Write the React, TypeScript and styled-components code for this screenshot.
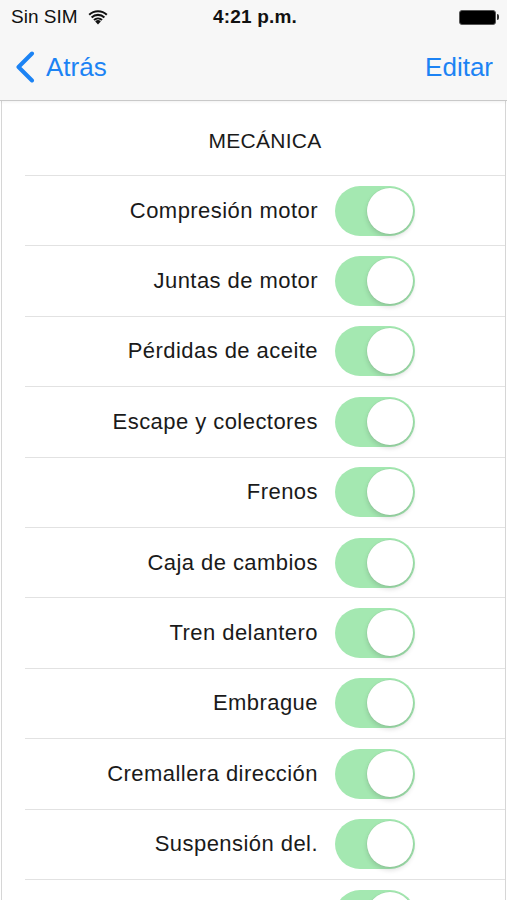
import React from "react";
import styled, { createGlobalStyle } from "styled-components";

const GlobalStyle = createGlobalStyle`
  html, body { margin: 0; padding: 0; background: #ffffff; }
  body { font-family: "Liberation Sans", Arial, sans-serif; overflow: hidden; }
`;

const Screen = styled.div`
  width: 507px;
  height: 900px;
  overflow: hidden;
  background: #ffffff;
`;

const TopBar = styled.header`
  background: #f7f7f7;
  border-bottom: 1px solid #c9c9c9;
  box-shadow: 0 1px 3px rgba(0, 0, 0, 0.06);
  position: relative;
  z-index: 1;
`;

const StatusBar = styled.div`
  height: 34px;
  display: grid;
  grid-template-columns: 1fr auto 1fr;
  align-items: center;
  padding: 0 8px 0 11px;
  color: #111;
  font-size: 19px;
`;

const Carrier = styled.div`
  display: flex;
  align-items: center;
  gap: 10px;
`;

const Time = styled.div`
  font-weight: 700;
  font-size: 19px;
  letter-spacing: 0.2px;
`;

const BatteryWrap = styled.div`
  justify-self: end;
  display: flex;
  align-items: center;
  gap: 1px;
`;

const BatteryBody = styled.div`
  width: 35px;
  height: 13px;
  border-radius: 3px;
  background: #000;
  border: 1px solid #555;
`;

const BatteryNub = styled.div`
  width: 2px;
  height: 6px;
  border-radius: 0 2px 2px 0;
  background: #333;
`;

const NavBar = styled.nav`
  height: 66px;
  display: flex;
  align-items: center;
  justify-content: space-between;
  padding: 0 14px 0 14px;
`;

const NavButton = styled.button`
  display: flex;
  align-items: center;
  gap: 10px;
  border: none;
  background: none;
  padding: 0;
  color: #1c83f4;
  font-family: "Liberation Sans", Arial, sans-serif;
  font-size: 26px;
  cursor: pointer;
`;

const Table = styled.main`
  margin: 0 1px;
  border-left: 1px solid #d6d6d6;
  border-right: 1px solid #d6d6d6;
  min-height: 900px;
`;

const SectionHeader = styled.div`
  margin-left: 23px;
  height: 75px;
  box-sizing: border-box;
  padding-top: 6px;
  border-bottom: 1px solid #e2e2e2;
  display: flex;
  align-items: center;
  justify-content: center;
  font-size: 21px;
  letter-spacing: 0.3px;
  color: #1a1a1a;
`;

const Row = styled.div`
  margin-left: 23px;
  height: 70.4px;
  box-sizing: border-box;
  border-bottom: 1px solid #e2e2e2;
  display: flex;
  align-items: center;
`;

const Label = styled.span`
  flex: 0 0 293px;
  text-align: right;
  font-size: 22px;
  letter-spacing: 0.45px;
  color: #1a1a1a;
  white-space: nowrap;
`;

const Switch = styled.div<{ $on: boolean }>`
  margin-left: 17px;
  width: 80px;
  height: 50px;
  border-radius: 25px;
  box-sizing: border-box;
  background: ${(p) => (p.$on ? "#a4e8b1" : "#ececec")};
  display: flex;
  align-items: center;
  justify-content: ${(p) => (p.$on ? "flex-end" : "flex-start")};
  padding: 2px;
`;

const Knob = styled.div`
  width: 46px;
  height: 46px;
  border-radius: 50%;
  background: #ffffff;
  box-shadow: 0 3px 5px rgba(0, 0, 0, 0.14), 0 0 0 0.5px rgba(0, 0, 0, 0.06);
`;

const WifiIcon = () => (
  <svg width="20" height="15" viewBox="0 0 20 15">
    <path d="M10 14.5 L7.2 11.4 A4 4 0 0 1 12.8 11.4 Z" fill="#111" />
    <path d="M5.3 9.3 A6.8 6.8 0 0 1 14.7 9.3 L13.3 10.8 A4.8 4.8 0 0 0 6.7 10.8 Z" fill="#111" />
    <path d="M2.9 6.7 A10.2 10.2 0 0 1 17.1 6.7 L15.7 8.2 A8.2 8.2 0 0 0 4.3 8.2 Z" fill="#111" />
    <path d="M0.5 4.1 A13.6 13.6 0 0 1 19.5 4.1 L18.1 5.6 A11.6 11.6 0 0 0 1.9 5.6 Z" fill="#111" />
  </svg>
);

const Chevron = () => (
  <svg width="22" height="32" viewBox="0 0 22 32">
    <path d="M18 2.5 L4.5 16 L18 29.5" fill="none" stroke="#1c83f4" strokeWidth="4" strokeLinecap="round" strokeLinejoin="round" />
  </svg>
);

const items = [
  "Compresión motor",
  "Juntas de motor",
  "Pérdidas de aceite",
  "Escape y colectores",
  "Frenos",
  "Caja de cambios",
  "Tren delantero",
  "Embrague",
  "Cremallera dirección",
  "Suspensión del.",
  "",
];

export default function App() {
  return (
    <Screen>
      <GlobalStyle />
      <TopBar>
        <StatusBar>
          <Carrier>
            <span>Sin SIM</span>
            <WifiIcon />
          </Carrier>
          <Time>4:21 p.m.</Time>
          <BatteryWrap>
            <BatteryBody />
            <BatteryNub />
          </BatteryWrap>
        </StatusBar>
        <NavBar>
          <NavButton>
            <Chevron />
            <span>Atrás</span>
          </NavButton>
          <NavButton>Editar</NavButton>
        </NavBar>
      </TopBar>
      <Table>
        <SectionHeader>MECÁNICA</SectionHeader>
        {items.map((label, i) => (
          <Row key={i}>
            <Label>{label}</Label>
            <Switch $on>
              <Knob />
            </Switch>
          </Row>
        ))}
      </Table>
    </Screen>
  );
}
